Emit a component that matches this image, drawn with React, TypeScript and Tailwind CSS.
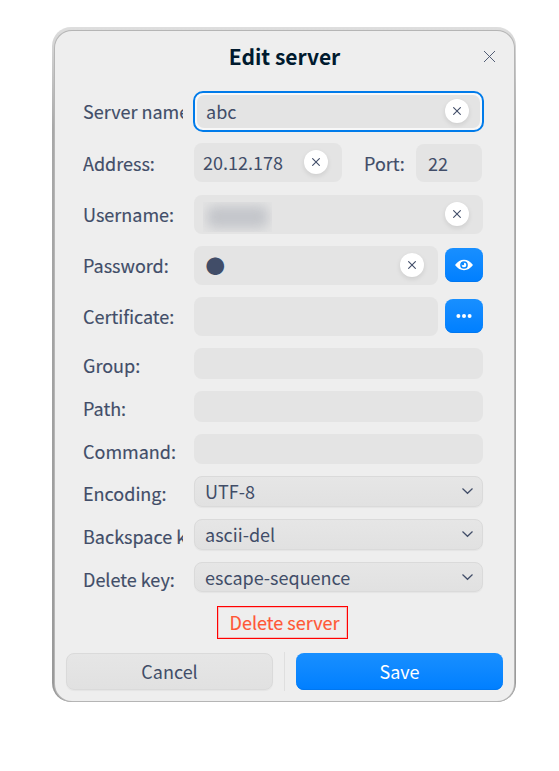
import type { ReactNode } from "react";

const FONT = "font-['Noto_Sans_CJK_SC','Noto_Sans',sans-serif]";

function Row({ label, height, offset, children }: { label: string; height: string; offset: string; children: ReactNode }) {
  return (
    <div className={`flex items-start ${height}`}>
      <label className={`w-[100px] shrink-0 overflow-hidden whitespace-nowrap leading-7 [-webkit-text-stroke:0.15px_#414d68] ${offset}`}>{label}</label>
      <div className="ml-[11px] flex h-full flex-1 items-center">{children}</div>
    </div>
  );
}

function ClearButton() {
  return (
    <button className="flex size-6 shrink-0 items-center justify-center rounded-full bg-white shadow-[0_2px_5px_rgba(0,0,0,0.10)]">
      <svg width="8" height="8" viewBox="0 0 8 8" fill="none" stroke="#414d68" strokeWidth="1.1">
        <path d="M.3.3 7.7 7.7M7.7.3.3 7.7" />
      </svg>
    </button>
  );
}

function BlueButton({ children }: { children: ReactNode }) {
  return (
    <button className="ml-[7px] mb-px flex h-[34px] w-[38px] shrink-0 items-center justify-center rounded-lg bg-linear-to-b from-[#188fff] to-[#007fff] shadow-[inset_0_-1px_0_#0077f0]">
      {children}
    </button>
  );
}

function Select({ value }: { value: string }) {
  return (
    <div className="flex h-full w-[289px] items-center justify-between rounded-lg border border-[#dadada] bg-linear-to-b from-[#e6e6e6] to-[#e1e1e1] pl-2.5 pr-[9px] shadow-[0_1px_1px_rgba(0,0,0,0.04)]">
      <span className="pb-px leading-7">{value}</span>
      <svg width="12" height="8" viewBox="0 0 12 8" fill="none" stroke="#414d68" strokeWidth="1.2" className="mb-px">
        <path d="M1.5 1.5 6.5 6.3 11.5 1.5" />
      </svg>
    </div>
  );
}

export default function App() {
  return (
    <div className={`h-[771px] w-[559px] overflow-hidden bg-white pl-[52px] pt-[27px] text-[18px] text-[#414d68] ${FONT}`}>
      <div className="h-[675px] w-[464px] rounded-[19px] bg-linear-to-b from-[#dedede] from-0% via-[#a8a8a8] via-15% to-[#999] pb-px pl-[3px] pr-[2px] pt-[4px]">
        <div className="flex h-full flex-col rounded-[17px] bg-[#eee] shadow-[0_0_0_1px_#b5b5b5]">
          <header className="flex h-[60px] shrink-0 items-start pl-[28px]">
            <h1 className="mt-[9px] w-[403px] text-center text-[21px] font-bold leading-8 text-[#001a2e]">Edit server</h1>
            <svg width="13" height="13" viewBox="0 0 13 13" fill="none" stroke="#414d68" strokeWidth="0.9" className="-ml-[3px] mt-[19px]">
              <path d="M1 1 12 12M12 1 1 12" />
            </svg>
          </header>

          <main className="flex flex-col gap-3 pl-[28px]">
            <Row label="Server name:" height="h-10" offset="mt-[6px]">
              <div className="-ml-px h-[41px] w-[291px] shrink-0 rounded-[10px] border-2 border-[#007bea] bg-[#f8f8f8] p-[2px]">
                <div className="flex h-full items-center justify-between rounded-[7px] bg-[#e4e4e4] pl-[9px] pr-[11px]">
                  <span className="pb-px leading-7">abc</span>
                  <ClearButton />
                </div>
              </div>
            </Row>
            <Row label="Address:" height="h-10" offset="mt-[6px]">
              <div className="mb-px flex h-[39px] w-[148px] items-center justify-between rounded-lg bg-[#e4e4e4] pl-[9px] pr-[14px]">
                <span className="pb-0.5 leading-7">20.12.178</span>
                <div className="pb-0.5"><ClearButton /></div>
              </div>
              <span className="ml-[22px] w-[52px] leading-7 [-webkit-text-stroke:0.15px_#414d68]">Port:</span>
              <div className="flex h-[38px] w-[66px] items-center rounded-lg bg-[#e4e4e4] pl-3 leading-7">22</div>
            </Row>
            <Row label="Username:" height="h-[39px]" offset="mt-[5px]">
              <div className="flex h-full w-[289px] items-center justify-between rounded-lg bg-[#e4e4e4] pl-[9px] pr-[14px]">
                <div className="mt-1 h-[30px] w-[69px] overflow-hidden p-1">
                  <div className="h-[22px] w-[61px] rounded-md bg-[#c3c5ca] blur-[6px]" />
                </div>
                <div className="pb-0.5"><ClearButton /></div>
              </div>
            </Row>
            <Row label="Password:" height="h-[39px]" offset="mt-[5px]">
              <div className="flex h-full w-[244px] items-center justify-between rounded-lg bg-[#e4e4e4] pl-[11.5px] pr-[14px]">
                <span className="text-[19.5px] leading-7">●</span>
                <div className="pb-px"><ClearButton /></div>
              </div>
              <BlueButton>
                <svg width="18" height="12" viewBox="0 0 18 12">
                  <path d="M0 6Q4 .8 9 .8T18 6Q14 11.2 9 11.2T0 6Z" fill="#fff" />
                  <circle cx="9" cy="6" r="3.1" fill="none" stroke="#0a88ff" strokeWidth="1.5" />
                  <circle cx="7.9" cy="4.9" r="1.3" fill="#0a88ff" />
                </svg>
              </BlueButton>
            </Row>
            <Row label="Certificate:" height="h-[39px]" offset="mt-[5px]">
              <div className="h-full w-[244px] rounded-lg bg-[#e4e4e4]" />
              <BlueButton>
                <svg width="16" height="4" viewBox="0 0 16 4" fill="#fff">
                  <circle cx="2.4" cy="2" r="2" />
                  <circle cx="8" cy="2" r="2" />
                  <circle cx="13.6" cy="2" r="2" />
                </svg>
              </BlueButton>
            </Row>
            <Row label="Group:" height="h-[31px]" offset="mt-[3px]">
              <div className="h-full w-[289px] rounded-lg bg-[#e4e4e4]" />
            </Row>
            <Row label="Path:" height="h-[31px]" offset="mt-[3px]">
              <div className="h-full w-[289px] rounded-lg bg-[#e4e4e4]" />
            </Row>
            <Row label="Command:" height="h-[30px]" offset="mt-[3px]">
              <div className="h-full w-[289px] rounded-lg bg-[#e4e4e4]" />
            </Row>
            <Row label="Encoding:" height="h-[31px]" offset="mt-[3px]">
              <Select value="UTF-8" />
            </Row>
            <Row label="Backspace key:" height="h-[31px]" offset="mt-[3px]">
              <Select value="ascii-del" />
            </Row>
            <Row label="Delete key:" height="h-[30px]" offset="mt-[3px]">
              <Select value="escape-sequence" />
            </Row>
          </main>

          <button className="ml-[162px] mt-[14px] flex h-[33px] w-[131px] shrink-0 items-center justify-center border border-[#f00] pb-0.5 pl-1 leading-7 text-[#ff5736] shadow-[inset_0_0_0_1px_#f6bcbc] [-webkit-text-stroke:0.15px_#ff5736]">
            Delete server
          </button>

          <footer className="ml-[11px] mt-[13px] flex h-[39px] items-center">
            <button className="flex h-[37px] w-[207px] items-center justify-center rounded-lg border border-[#dadada] bg-linear-to-b from-[#e6e6e6] to-[#e1e1e1] pb-0.5 leading-7 shadow-[0_1px_1px_rgba(0,0,0,0.04)]">
              Cancel
            </button>
            <div className="ml-[11px] h-[39px] w-px bg-[#dfdfdf]" />
            <button className="ml-[11px] flex h-[37px] w-[207px] items-center justify-center rounded-lg bg-linear-to-b from-[#188fff] to-[#007fff] pb-0.5 leading-7 text-white shadow-[inset_0_-1px_0_#0077f0]">
              Save
            </button>
          </footer>
        </div>
      </div>
    </div>
  );
}
